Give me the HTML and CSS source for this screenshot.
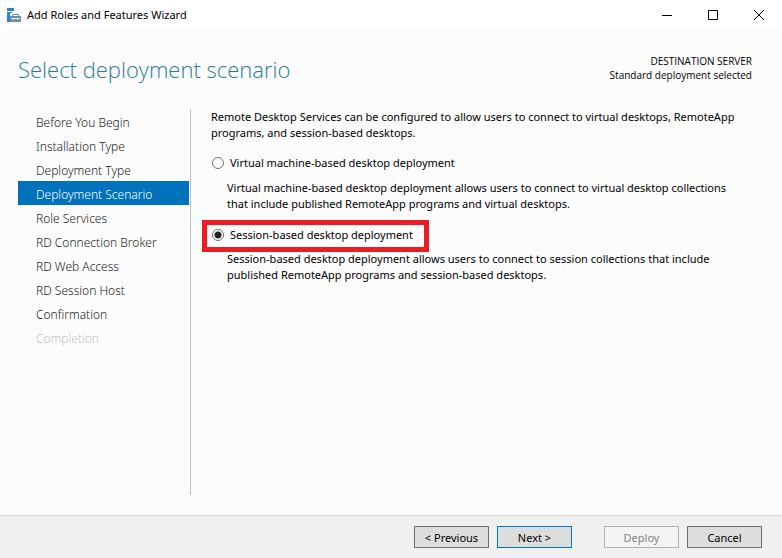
FILE: index.html
```
<!DOCTYPE html>
<html lang="en">
<head>
  <meta charset="UTF-8">
  <meta name="viewport" content="width=device-width, initial-scale=1.0">
  <title>Add Roles and Features Wizard</title>
  <link rel="stylesheet" href="styles.css">
</head>
<body>
  <div class="titlebar">
    <svg class="app-icon" width="16" height="16" viewBox="0 0 16 16" aria-hidden="true">
      <path fill="#1e8ad6" d="M0 1h7v3H0zM0 5h5v1H3v9H0z"/>
      <path fill="none" stroke="#6f8fa6" d="M5.500 9.500v-2h6v2"/>
      <path fill="#6f8fa6" d="M3 9h11v6H3z"/>
      <path fill="#e4ebf0" d="M4 11h9v1h-2v1h-1v-1H7v1H6v-1H4z"/>
    </svg>
    <span class="titlebar-text">Add Roles and Features Wizard</span>
    <div class="window-controls">
      <button type="button" aria-label="Minimize">
        <svg width="12" height="12" viewBox="0 0 12 12"><path d="M1 6.500h10"/></svg>
      </button>
      <button type="button" aria-label="Maximize">
        <svg width="12" height="12" viewBox="0 0 12 12"><path d="M1.500 1.500h9v9h-9z"/></svg>
      </button>
      <button type="button" aria-label="Close">
        <svg width="12" height="12" viewBox="0 0 12 12"><path d="M1 1l10 10M11 1L1 11"/></svg>
      </button>
    </div>
  </div>

  <header class="header">
    <h1>Select deployment scenario</h1>
    <div class="destination">
      <div>DESTINATION SERVER</div>
      <div>Standard deployment selected</div>
    </div>
  </header>

  <div class="wizard">
    <nav class="steps">
      <a href="#">Before You Begin</a>
      <a href="#">Installation Type</a>
      <a href="#">Deployment Type</a>
      <a href="#" class="active" aria-current="step">Deployment Scenario</a>
      <a href="#">Role Services</a>
      <a href="#">RD Connection Broker</a>
      <a href="#">RD Web Access</a>
      <a href="#">RD Session Host</a>
      <a href="#">Confirmation</a>
      <a href="#" class="disabled" aria-disabled="true">Completion</a>
    </nav>

    <main class="content">
      <p class="intro">Remote Desktop Services can be configured to allow users to connect to virtual desktops, RemoteApp<br>programs, and session-based desktops.</p>

      <div class="option">
        <input type="radio" id="vmBased" name="scenario">
        <label for="vmBased">Virtual machine-based desktop deployment</label>
      </div>
      <p class="description">Virtual machine-based desktop deployment allows users to connect to virtual desktop collections<br>that include published RemoteApp programs and virtual desktops.</p>

      <div class="option highlight">
        <input type="radio" id="sessionBased" name="scenario" checked>
        <label for="sessionBased">Session-based desktop deployment</label>
      </div>
      <p class="description">Session-based desktop deployment allows users to connect to session collections that include<br>published RemoteApp programs and session-based desktops.</p>
    </main>
  </div>

  <footer class="footer">
    <button type="button" class="btn">&lt; Previous</button>
    <button type="button" class="btn btn-default">Next &gt;</button>
    <button type="button" class="btn btn-deploy" disabled>Deploy</button>
    <button type="button" class="btn">Cancel</button>
  </footer>
</body>
</html>
```
FILE: styles.css
```
* {
  box-sizing: border-box;
}
body {
  margin: 0;
  min-height: 100vh;
  display: flex;
  flex-direction: column;
  background-color: #fcfcfc;
  color: #000;
  font-family: "Noto Sans", "Open Sans", sans-serif;
  font-size: 11px;
  line-height: 16px;
}
p {
  margin: 0;
}

/* Title bar */
.titlebar {
  display: flex;
  align-items: center;
  height: 30px;
  padding-left: 7px;
  background-color: #fff;
}
.app-icon {
  margin-right: 4px;
}
.window-controls {
  display: flex;
  margin-left: auto;
}
.window-controls button {
  display: flex;
  align-items: center;
  justify-content: center;
  width: 46px;
  height: 28px;
  padding: 0;
  border: none;
  background: none;
}
.window-controls path {
  fill: none;
  stroke: #000;
}

/* Page heading */
.header {
  display: flex;
  justify-content: space-between;
  padding: 23px 30px 0 18px;
}
h1 {
  margin: 0;
  color: #2b7a9b;
  font-family: "Open Sans", "Noto Sans", sans-serif;
  font-size: 22px;
  font-weight: 300;
  line-height: 32px;
}
.destination {
  padding-top: 1px;
  font-family: "Open Sans", "Noto Sans", sans-serif;
  font-size: 10px;
  line-height: 14px;
  text-align: right;
}

/* Steps and content */
.wizard {
  flex: 1;
  display: flex;
  padding: 24px 30px 20px 18px;
}
.steps {
  flex: none;
  width: 173px;
  padding-right: 1px;
  border-right: 1px solid #bfbfbf;
}
.steps a {
  display: block;
  padding: 4px 0 0 18px;
  color: #222;
  font-size: 12px;
  font-weight: 300;
  line-height: 20px;
  text-decoration: none;
}
.steps .active {
  background-color: #0072bc;
  color: #fff;
}
.steps .disabled {
  color: #c3c3c3;
}
.content {
  flex: 1;
  padding-left: 20px;
  white-space: nowrap;
}
.option {
  display: flex;
  align-items: center;
  width: fit-content;
  margin-top: 14px;
}
.option input {
  appearance: none;
  width: 12px;
  height: 12px;
  margin: 0 6px 0 1px;
  border: 1px solid #707070;
  border-radius: 50%;
  background-color: #fff;
}
.option input:checked {
  background-image: radial-gradient(circle, #222 3px, transparent 4px);
}
.highlight {
  margin: 8px 0 -1px -9px;
  padding: 2px 11px 4px 4px;
  border: 5px solid #ed1c24;
}
.description {
  margin-top: 9px;
  padding-left: 16px;
}
.highlight + .description {
  margin-top: 0;
}

/* Buttons */
.footer {
  display: flex;
  justify-content: flex-end;
  gap: 8px;
  padding: 10px 20px;
  border-top: 1px solid #d9d9d9;
  background-color: #f0f0f0;
}
.btn {
  width: 75px;
  height: 22px;
  padding: 1px 0 0;
  border: 1px solid #707070;
  background-color: #ddd;
  color: #000;
  font: inherit;
}
.btn-default {
  border-color: #0078d7;
}
.btn-deploy {
  margin-left: 24px;
}
.btn:disabled {
  border-color: #adb2b5;
  background-color: #f4f4f4;
  color: #838383;
}
```
